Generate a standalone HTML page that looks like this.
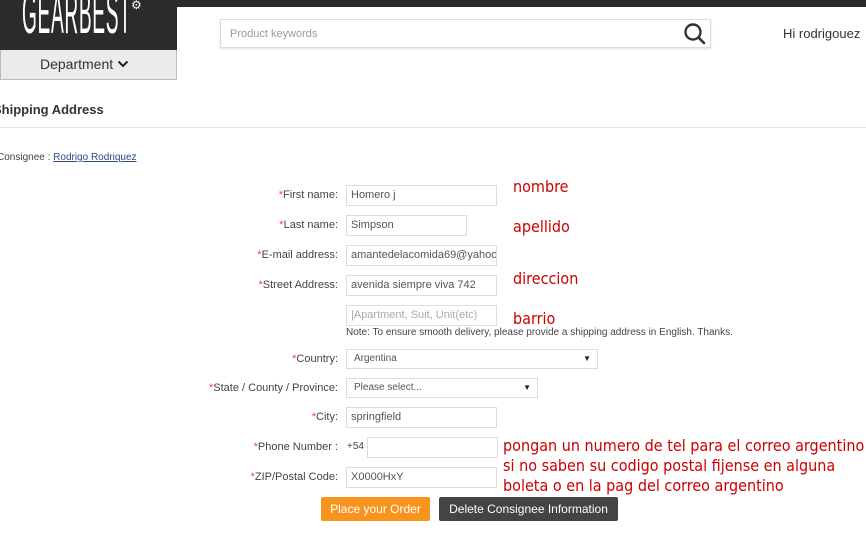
<!DOCTYPE html>
<html><head><meta charset="utf-8"><style>
*{margin:0;padding:0;box-sizing:border-box}
body{width:866px;height:551px;overflow:hidden;background:#fff;font-family:"Liberation Sans",Arial,sans-serif;position:relative}
.a{position:absolute}
.lbl{position:absolute;right:528px;font-size:11px;color:#444;white-space:nowrap}
.lbl b{color:#e44;font-weight:normal}
.in{position:absolute;left:346px;height:21px;border:1px solid #ddd;font-size:11px;color:#555;padding:3px 4px;white-space:nowrap;overflow:hidden}
.red{position:absolute;color:#c00;font-size:16px;white-space:nowrap;font-family:"DejaVu Sans Condensed","DejaVu Sans",sans-serif}
.sel:after{content:"▼";position:absolute;right:6px;top:4px;font-size:8px;color:#222}
</style></head><body>
<div class="a" style="left:0;top:0;width:866px;height:7px;background:#2b2b2b"></div>
<div class="a" style="left:0;top:0;width:177px;height:50px;background:#2b2b2b;overflow:hidden">
<div class="a" style="left:22px;top:-20px;color:#fff;font-size:58px;font-family:'Liberation Sans Narrow','Liberation Sans',sans-serif;transform:scaleX(.33);transform-origin:left;letter-spacing:2px;white-space:nowrap">GEARBEST</div>
<div class="a" style="left:131px;top:-2px;color:#fff;font-size:12px">⚙</div>
</div>
<div class="a" style="left:0;top:50px;width:177px;height:30px;background:#ebebeb;border:1px solid #bbb;border-top:none;font-size:14px;color:#333;line-height:28px;padding-left:39px">Department <svg width="12" height="8" viewBox="0 0 12 8" style="vertical-align:1px"><path d="M1.5 1.5L6 6L10.5 1.5" fill="none" stroke="#222" stroke-width="2"/></svg></div>
<div class="a" style="left:220px;top:19px;width:491px;height:29px;border:1px solid #ddd;box-shadow:0 1px 2px #ddd"></div>
<div class="a" style="left:230px;top:28px;font-size:11px;color:#999">Product keywords</div>
<svg class="a" style="left:683px;top:22px" width="24" height="24" viewBox="0 0 24 24"><circle cx="10" cy="10" r="7.5" fill="none" stroke="#333" stroke-width="2.4"/><path d="M15.5 15.5L21 21" stroke="#333" stroke-width="2.6" stroke-linecap="round"/></svg>
<div class="a" style="left:783px;top:26px;font-size:13px;color:#333">Hi rodrigouez</div>
<div class="a" style="left:-7px;top:102px;font-size:13px;font-weight:bold;color:#333">Shipping Address</div>
<div class="a" style="left:0;top:127px;width:866px;height:1px;background:#e3e3e3"></div>
<div class="a" style="left:-3px;top:152px;font-size:10px;color:#444">Consignee : <span style="color:#2a4a8a;text-decoration:underline">Rodrigo Rodriquez</span></div>

<div class="lbl" style="top:189px"><b>*</b>First name:</div>
<div class="in" style="top:185px;width:151px">Homero j</div>
<div class="lbl" style="top:219px"><b>*</b>Last name:</div>
<div class="in" style="top:215px;width:121px">Simpson</div>
<div class="lbl" style="top:249px"><b>*</b>E-mail address:</div>
<div class="in" style="top:245px;width:151px">amantedelacomida69@yahoo</div>
<div class="lbl" style="top:279px"><b>*</b>Street Address:</div>
<div class="in" style="top:275px;width:151px">avenida siempre viva 742</div>
<div class="in" style="top:305px;width:151px;color:#aaa">|Apartment, Suit, Unit(etc)</div>
<div class="a" style="left:346px;top:327px;font-size:10px;color:#444">Note: To ensure smooth delivery, please provide a shipping address in English. Thanks.</div>

<div class="lbl" style="top:353px"><b>*</b>Country:</div>
<div class="in sel" style="top:349px;width:252px;height:20px;padding-left:7px;font-size:10px">Argentina</div>
<div class="lbl" style="top:382px"><b>*</b>State / County / Province:</div>
<div class="in sel" style="top:378px;width:192px;height:20px;padding-left:7px;font-size:10px">Please select...</div>
<div class="lbl" style="top:411px"><b>*</b>City:</div>
<div class="in" style="top:407px;width:151px">springfield</div>
<div class="lbl" style="top:441px"><b>*</b>Phone Number :</div>
<div class="a" style="left:347px;top:441px;font-size:10px;color:#444">+54</div>
<div class="in" style="top:437px;left:367px;width:131px"></div>
<div class="lbl" style="top:471px"><b>*</b>ZIP/Postal Code:</div>
<div class="in" style="top:467px;width:151px">X0000HxY</div>

<div class="a" style="left:321px;top:497px;width:109px;height:24px;background:#f7941d;color:#fff;font-size:12px;text-align:center;line-height:24px;border-radius:2px">Place your Order</div>
<div class="a" style="left:439px;top:497px;width:179px;height:24px;background:#444;color:#fff;font-size:12px;text-align:center;line-height:24px;border-radius:2px">Delete Consignee Information</div>

<div class="red" style="left:513px;top:177px">nombre</div>
<div class="red" style="left:513px;top:217px">apellido</div>
<div class="red" style="left:513px;top:269px">direccion</div>
<div class="red" style="left:513px;top:309px">barrio</div>
<div class="red" style="left:503px;top:436px">pongan un numero de tel para el correo argentino</div>
<div class="red" style="left:503px;top:456px">si no saben su codigo postal fijense en alguna</div>
<div class="red" style="left:503px;top:476px">boleta o en la pag del correo argentino</div>
</body></html>
